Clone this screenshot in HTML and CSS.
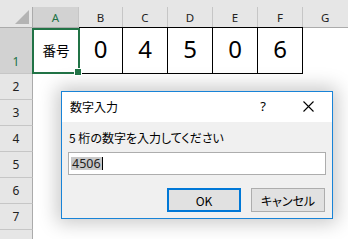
FILE: index.html
```html
<!DOCTYPE html>
<html lang="ja">
<head>
<meta charset="utf-8">
<link rel="stylesheet" href="styles.css">
</head>
<body>
<div class="app">
  <div class="band"></div>
  <div class="sheet">
    <div class="corner"><span class="tri"></span></div>
    <div class="ch sel">A</div>
    <div class="ch">B</div>
    <div class="ch">C</div>
    <div class="ch">D</div>
    <div class="ch">E</div>
    <div class="ch">F</div>
    <div class="ch last">G</div>

    <div class="rh sel r1">1</div>
    <div class="cell a1">番号</div>
    <div class="cell num">0</div>
    <div class="cell num">4</div>
    <div class="cell num">5</div>
    <div class="cell num">0</div>
    <div class="cell num">6</div>
    <div class="cell rest"></div>

    <div class="rh">2</div><div class="cell span"></div>
    <div class="rh">3</div><div class="cell span"></div>
    <div class="rh">4</div><div class="cell span"></div>
    <div class="rh">5</div><div class="cell span"></div>
    <div class="rh">6</div><div class="cell span"></div>
    <div class="rh">7</div><div class="cell span"></div>
    <div class="rh"></div><div class="cell span"></div>
  </div>

  <div class="dialog">
    <div class="titlebar">
      <span class="title">数字入力</span>
      <span class="help">?</span>
      <span class="close">
        <svg width="11" height="11" viewBox="0 0 11 11"><path d="M0.5 0.5 L10.5 10.5 M10.5 0.5 L0.5 10.5" stroke="#000" stroke-width="1.1" fill="none"/></svg>
      </span>
    </div>
    <div class="body">
      <div class="prompt">5 桁の数字を入力してください</div>
      <div class="input"><span class="selected">4506</span><span class="caret"></span></div>
      <div class="buttons">
        <div class="btn default">OK</div>
        <div class="btn">キャンセル</div>
      </div>
    </div>
  </div>
</div>
</body>
</html>
```

FILE: styles.css
```css
* { box-sizing: border-box; }
html, body { margin: 0; padding: 0; }
body {
  width: 348px;
  height: 239px;
  overflow: hidden;
  background: #fff;
  font-family: "Noto Sans", "Noto Sans CJK JP", sans-serif;
}
.app { position: relative; width: 348px; height: 239px; overflow: hidden; }
.band { height: 7px; background: #e6e6e6; }
.sheet {
  display: grid;
  grid-template-columns: 33px 46px 44px 45px 45px 45px 45px 1fr;
  grid-template-rows: 21px 46px repeat(7, 26px);
}
.corner {
  background: #e6e6e6;
  border-right: 1px solid #ababab;
  border-bottom: 1px solid #ababab;
  position: relative;
}
.tri {
  position: absolute;
  right: 3px;
  bottom: 3px;
  width: 0; height: 0;
  border-left: 14px solid transparent;
  border-bottom: 14px solid #b4b4b4;
}
.ch {
  background: #e6e6e6;
  border-right: 1px solid #c6c6c6;
  border-bottom: 1px solid #ababab;
  display: flex;
  align-items: center;
  justify-content: center;
  font-size: 11.5px;
  color: #222;
  padding-top: 1px;
}
.ch.sel { background: #d2d2d2; color: #217346; }
.ch.last { justify-content: flex-start; padding-left: 18px; border-right: none; }
.rh {
  background: #e6e6e6;
  border-right: 1px solid #ababab;
  border-bottom: 1px solid #c6c6c6;
  display: flex;
  align-items: center;
  justify-content: center;
  font-size: 12px;
  color: #222;
}
.rh.sel { background: #d2d2d2; color: #217346; }
.rh.r1 { align-items: flex-end; padding-bottom: 3px; }
.cell { background: #fff; }
.num {
  border-right: 1px solid #000;
  border-bottom: 1px solid #000;
  border-top: 1px solid #000;
  margin-top: -1px;
  display: flex;
  align-items: center;
  justify-content: center;
  font-size: 24px;
  color: #000;
  padding-bottom: 5px;
  font-family: "Noto Sans", sans-serif;
}
.a1 {
  position: relative;
  display: flex;
  align-items: center;
  justify-content: center;
  font-family: "Noto Sans CJK JP", sans-serif;
  font-size: 13.5px;
  color: #000;
  border-bottom: 1px solid #000;
  padding-bottom: 2px;
}
.a1::after {
  content: "";
  position: absolute;
  left: -1px; top: 0; right: -1px; bottom: -1px;
  border: 2px solid #217346;
}
.a1::before {
  content: "";
  position: absolute;
  right: -3px;
  bottom: -3px;
  width: 6px;
  height: 6px;
  background: #217346;
  border: 1px solid #fff;
  z-index: 1;
}
.span { grid-column: 2 / -1; }

.dialog {
  position: absolute;
  left: 61px;
  top: 91px;
  width: 272px;
  height: 128px;
  border: 1px solid #1883d7;
  background: #f0f0f0;
  box-shadow: 0 0 18px 4px rgba(0,0,0,0.22);
  display: flex;
  flex-direction: column;
  font-family: "Noto Sans CJK JP", sans-serif;
  font-feature-settings: "palt";
  color: #000;
}
.titlebar {
  height: 30px;
  background: #fff;
  display: flex;
  align-items: center;
  padding-left: 8px;
  padding-bottom: 2px;
}
.title { font-size: 12px; flex: 1; }
.help { font-size: 13px; width: 10px; text-align: center; margin-right: 35px; font-family: "Noto Sans", sans-serif; }
.close { width: 11px; height: 11px; margin-right: 18px; display: flex; }
.body {
  flex: 1;
  padding: 6px 6px 0 6px;
  display: flex;
  flex-direction: column;
}
.prompt { font-size: 12px; height: 20px; line-height: 20px; padding-left: 1px; }
.input {
  margin-top: 4px;
  height: 23px;
  width: 258px;
  background: #fff;
  border: 1px solid #adadad;
  display: flex;
  align-items: center;
  padding-left: 2px;
}
.selected {
  background: #c8c8c8;
  font-family: "Noto Sans", sans-serif;
  font-size: 12.5px;
  line-height: 13px;
  height: 13px;
  color: #222;
  padding: 0 1px;
}
.caret { width: 1px; height: 13px; background: #000; }
.buttons {
  display: flex;
  justify-content: flex-end;
  gap: 10px;
  margin-top: 13px;
  padding-right: 1px;
}
.btn {
  width: 74px;
  height: 24px;
  background: #e1e1e1;
  border: 1px solid #adadad;
  display: flex;
  align-items: center;
  justify-content: center;
  font-size: 12px;
}
.btn.default { border: 2px solid #0078d7; }
```
